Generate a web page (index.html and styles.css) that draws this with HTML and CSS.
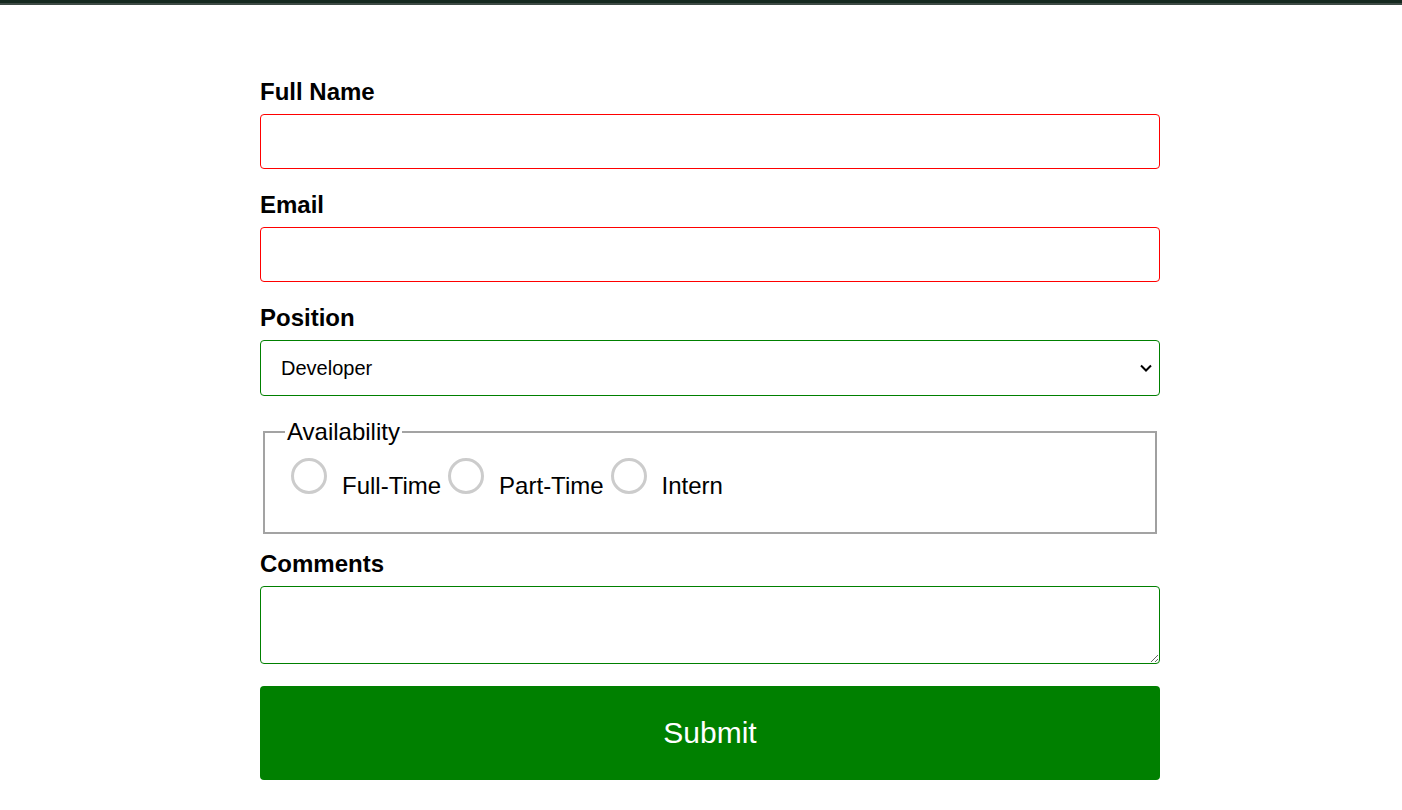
FILE: index.html
```html
<!DOCTYPE html>
<html lang="en">
<head>
<meta charset="utf-8">
<title>Application Form</title>
<link rel="stylesheet" href="styles.css">
</head>
<body>
<div class="topbar"></div>
<form class="form">
  <div class="group">
    <label class="label" for="name">Full Name</label>
    <input class="field invalid" id="name" type="text">
  </div>
  <div class="group">
    <label class="label" for="email">Email</label>
    <input class="field invalid" id="email" type="email">
  </div>
  <div class="group">
    <label class="label" for="position">Position</label>
    <div class="select-wrap">
      <select class="field valid select" id="position">
        <option>Developer</option>
        <option>Designer</option>
        <option>Manager</option>
      </select>
      <svg class="chevron" width="12" height="8" viewBox="0 0 12 8"><path d="M1 1.5 L6 6.5 L11 1.5" fill="none" stroke="#000" stroke-width="2"/></svg>
    </div>
  </div>
  <fieldset class="avail">
    <legend class="legend">Availability</legend>
    <div class="options"><input class="radio" type="radio" name="av" id="ft"><label class="opt" for="ft">Full-Time</label><input class="radio" type="radio" name="av" id="pt"><label class="opt" for="pt">Part-Time</label><input class="radio" type="radio" name="av" id="in"><label class="opt" for="in">Intern</label></div>
  </fieldset>
  <div class="group">
    <label class="label" for="comments">Comments</label>
    <textarea class="field valid area" id="comments"></textarea>
  </div>
  <button class="submit" type="submit">Submit</button>
</form>
</body>
</html>
```

FILE: styles.css
```css
html, body {
  margin: 0;
  padding: 0;
  background: #fff;
  font-family: "Liberation Sans", Arial, sans-serif;
  color: #000;
}
.topbar {
  height: 3px;
  background: #15291f;
  border-bottom: 2px solid #3d4a44;
}
.form {
  width: 900px;
  margin: 0 0 0 260px;
  padding-top: 72px;
}
.group {
  margin-bottom: 21px;
}
.label {
  display: block;
  font-weight: 700;
  font-size: 24px;
  line-height: 30px;
  margin-bottom: 7px;
}
.field {
  display: block;
  box-sizing: border-box;
  width: 100%;
  height: 55px;
  margin: 0;
  border-radius: 4px;
  background: #fff;
  font-family: "Liberation Sans", Arial, sans-serif;
  font-size: 20px;
  outline: none;
}
.invalid { border: 1px solid #ff0000; }
.valid { border: 1px solid #008000; }
.select-wrap { position: relative; }
.select {
  -webkit-appearance: none;
  appearance: none;
  height: 56px;
  padding: 0 40px 0 20px;
  color: #000;
}
.chevron {
  position: absolute;
  right: 8px;
  top: 24px;
  pointer-events: none;
}
.avail {
  margin: 22px 3px 15px;
  padding: 12px 20px 32px;
  border: 2px solid #a3a3a3;
  border-right-color: #a0a0a0;
}
.legend {
  font-size: 24px;
  line-height: 28px;
  padding: 0 2px;
}
.options {
  font-size: 24px;
  line-height: 28px;
}
.radio {
  -webkit-appearance: none;
  appearance: none;
  display: inline-block;
  vertical-align: baseline;
  box-sizing: border-box;
  width: 36px;
  height: 36px;
  margin: 0 15px 0 7px;
  border: 3px solid #cccccc;
  border-radius: 50%;
  background: #fff;
}
.radio:first-child { margin-left: 6px; }
.opt { vertical-align: baseline; }
.area {
  height: 78px;
  resize: vertical;
  padding: 10px;
}
.submit {
  display: block;
  width: 100%;
  height: 94px;
  margin: 22px 0 0;
  border: none;
  border-radius: 4px;
  background: #008000;
  color: #fff;
  font-family: "Liberation Sans", Arial, sans-serif;
  font-size: 30px;
  cursor: pointer;
}
```
